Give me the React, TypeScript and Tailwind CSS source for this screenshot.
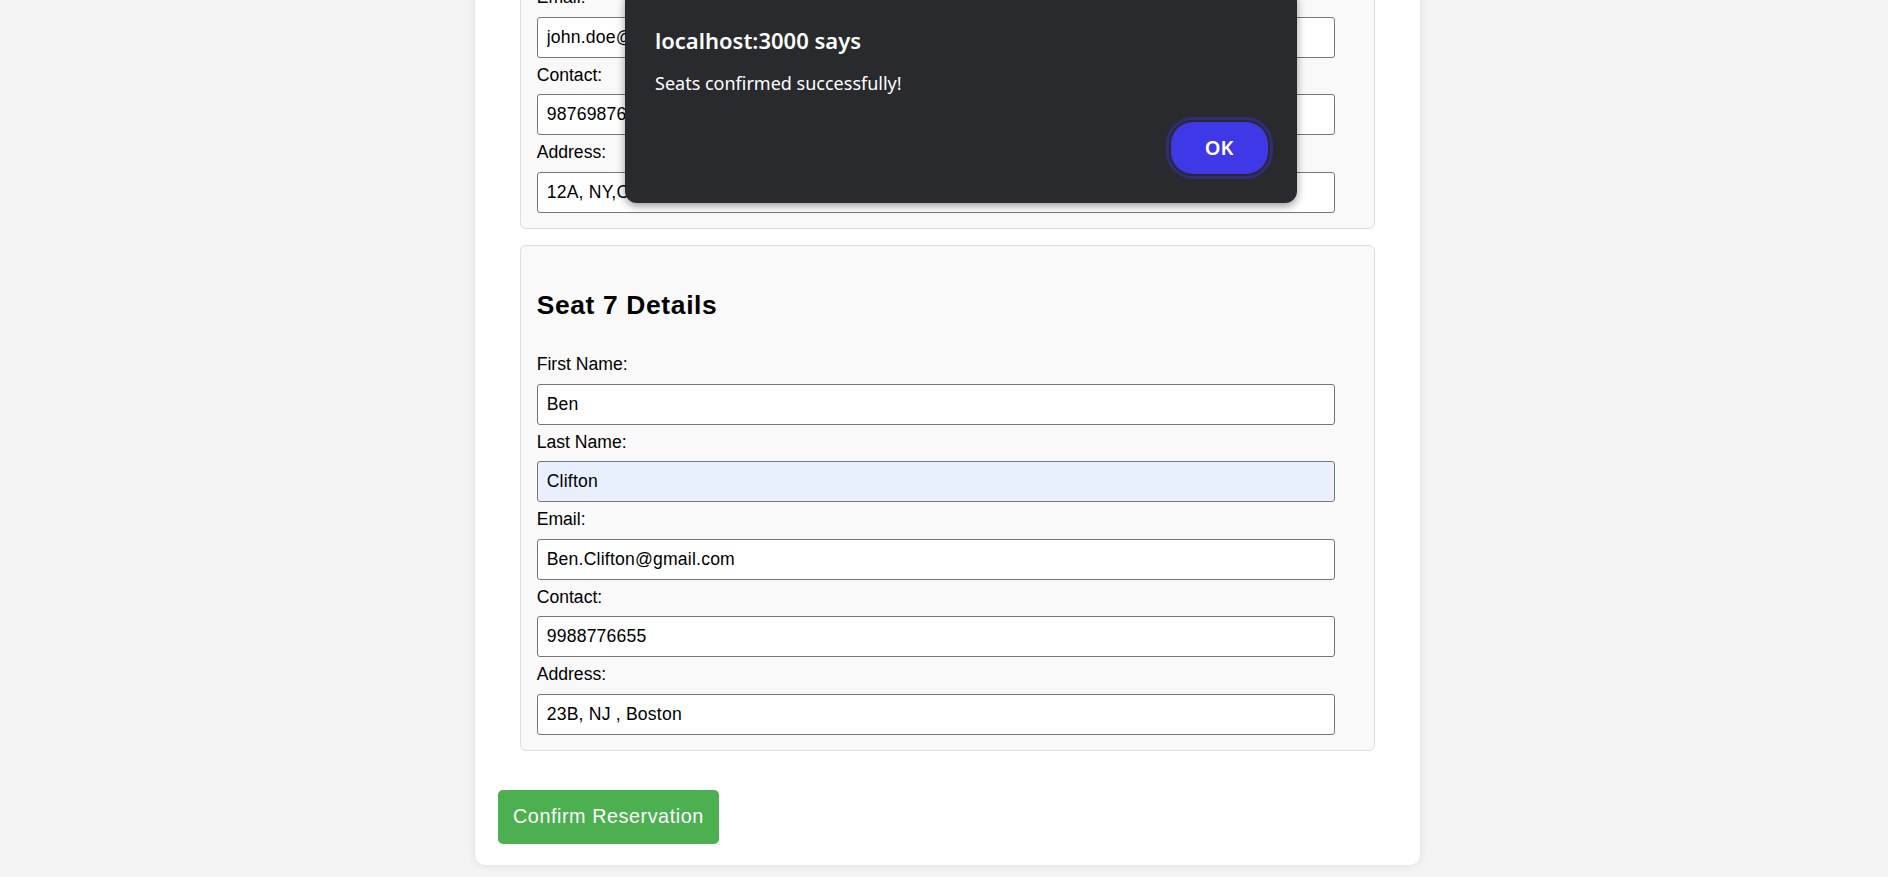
import React from "react";

type Seat = {
  n: number;
  first: string;
  last: string;
  email: string;
  contact: string;
  address: string;
  autofillLast?: boolean;
};

const seats: Seat[] = [
  {
    n: 6,
    first: "John",
    last: "Doe",
    email: "john.doe@gmail.com",
    contact: "9876987698",
    address: "12A, NY,California",
  },
  {
    n: 7,
    first: "Ben",
    last: "Clifton",
    email: "Ben.Clifton@gmail.com",
    contact: "9988776655",
    address: "23B, NJ , Boston",
    autofillLast: true,
  },
];

function Field({ label, value, autofill }: { label: string; value: string; autofill?: boolean }) {
  return (
    <div className="flex flex-col">
      <label className="block text-[17.6px] leading-[20px] text-black mb-[9.5px]">{label}</label>
      <input
        readOnly
        value={value}
        className={
          "w-[798px] h-[41px] border border-[#767676] rounded-[3px] px-[9px] text-[17.6px] tracking-[0.2px] text-black mb-[7px] outline-none " +
          (autofill ? "bg-[#e8f0fe]" : "bg-white")
        }
      />
    </div>
  );
}

function SeatCard({ seat, last }: { seat: Seat; last?: boolean }) {
  return (
    <div
      className={
        "mx-[23px] h-[506px] border border-[#dddddd] rounded-[6px] bg-[#f9f9f9] pt-[44px] pl-[15.7px] pb-[8px] " +
        (last ? "" : "mb-[16px]")
      }
    >
      <h2 className="text-[26.4px] leading-[31px] font-bold tracking-[0.65px] text-black mb-[33px]">
        Seat {seat.n} Details
      </h2>
      <Field label="First Name:" value={seat.first} />
      <Field label="Last Name:" value={seat.last} autofill={seat.autofillLast} />
      <Field label="Email:" value={seat.email} />
      <Field label="Contact:" value={seat.contact} />
      <Field label="Address:" value={seat.address} />
    </div>
  );
}

export default function App() {
  return (
    <div
      className="relative h-[877px] overflow-hidden bg-[#f4f4f4]"
      style={{ fontFamily: '"Liberation Sans", Arial, sans-serif' }}
    >
      <div className="flex justify-center pl-[7px]">
        <div className="w-[945px] -mt-[299px] bg-white rounded-[10px] shadow-[0_0_10px_rgba(0,0,0,0.1)] pt-[22px] pb-[21px] px-[22px] flex flex-col">
          {seats.map((s, i) => (
            <SeatCard key={s.n} seat={s} last={i === seats.length - 1} />
          ))}
          <div className="mt-[39px] pl-[1px]">
            <button className="h-[54px] px-[15px] bg-[#4caf50] text-white rounded-[5px] text-[19.8px] tracking-[0.55px]">
              Confirm Reservation
            </button>
          </div>
        </div>
      </div>

      {/* Browser alert dialog */}
      <div
        className="absolute left-[625px] top-[-10px] w-[672px] h-[213px] bg-[#292a2d] rounded-[12px] shadow-[0_3px_8px_rgba(0,0,0,0.4)] flex flex-col pl-[30px] pr-[29.5px] pt-[35px] pb-[29px]"
        style={{ fontFamily: '"Noto Sans", "Open Sans", sans-serif' }}
      >
        <div className="text-[22px] leading-[30px] font-semibold text-white">localhost:3000 says</div>
        <div className="mt-[16px] text-[18px] leading-[24px] text-white">Seats confirmed successfully!</div>
        <div className="mt-auto flex justify-end">
          <button className="w-[97px] h-[52px] rounded-[22px] bg-[#3f38e6] text-white text-[20px] font-semibold outline outline-[3px] outline-offset-[2px] outline-[#302d78]">
            OK
          </button>
        </div>
      </div>
    </div>
  );
}
